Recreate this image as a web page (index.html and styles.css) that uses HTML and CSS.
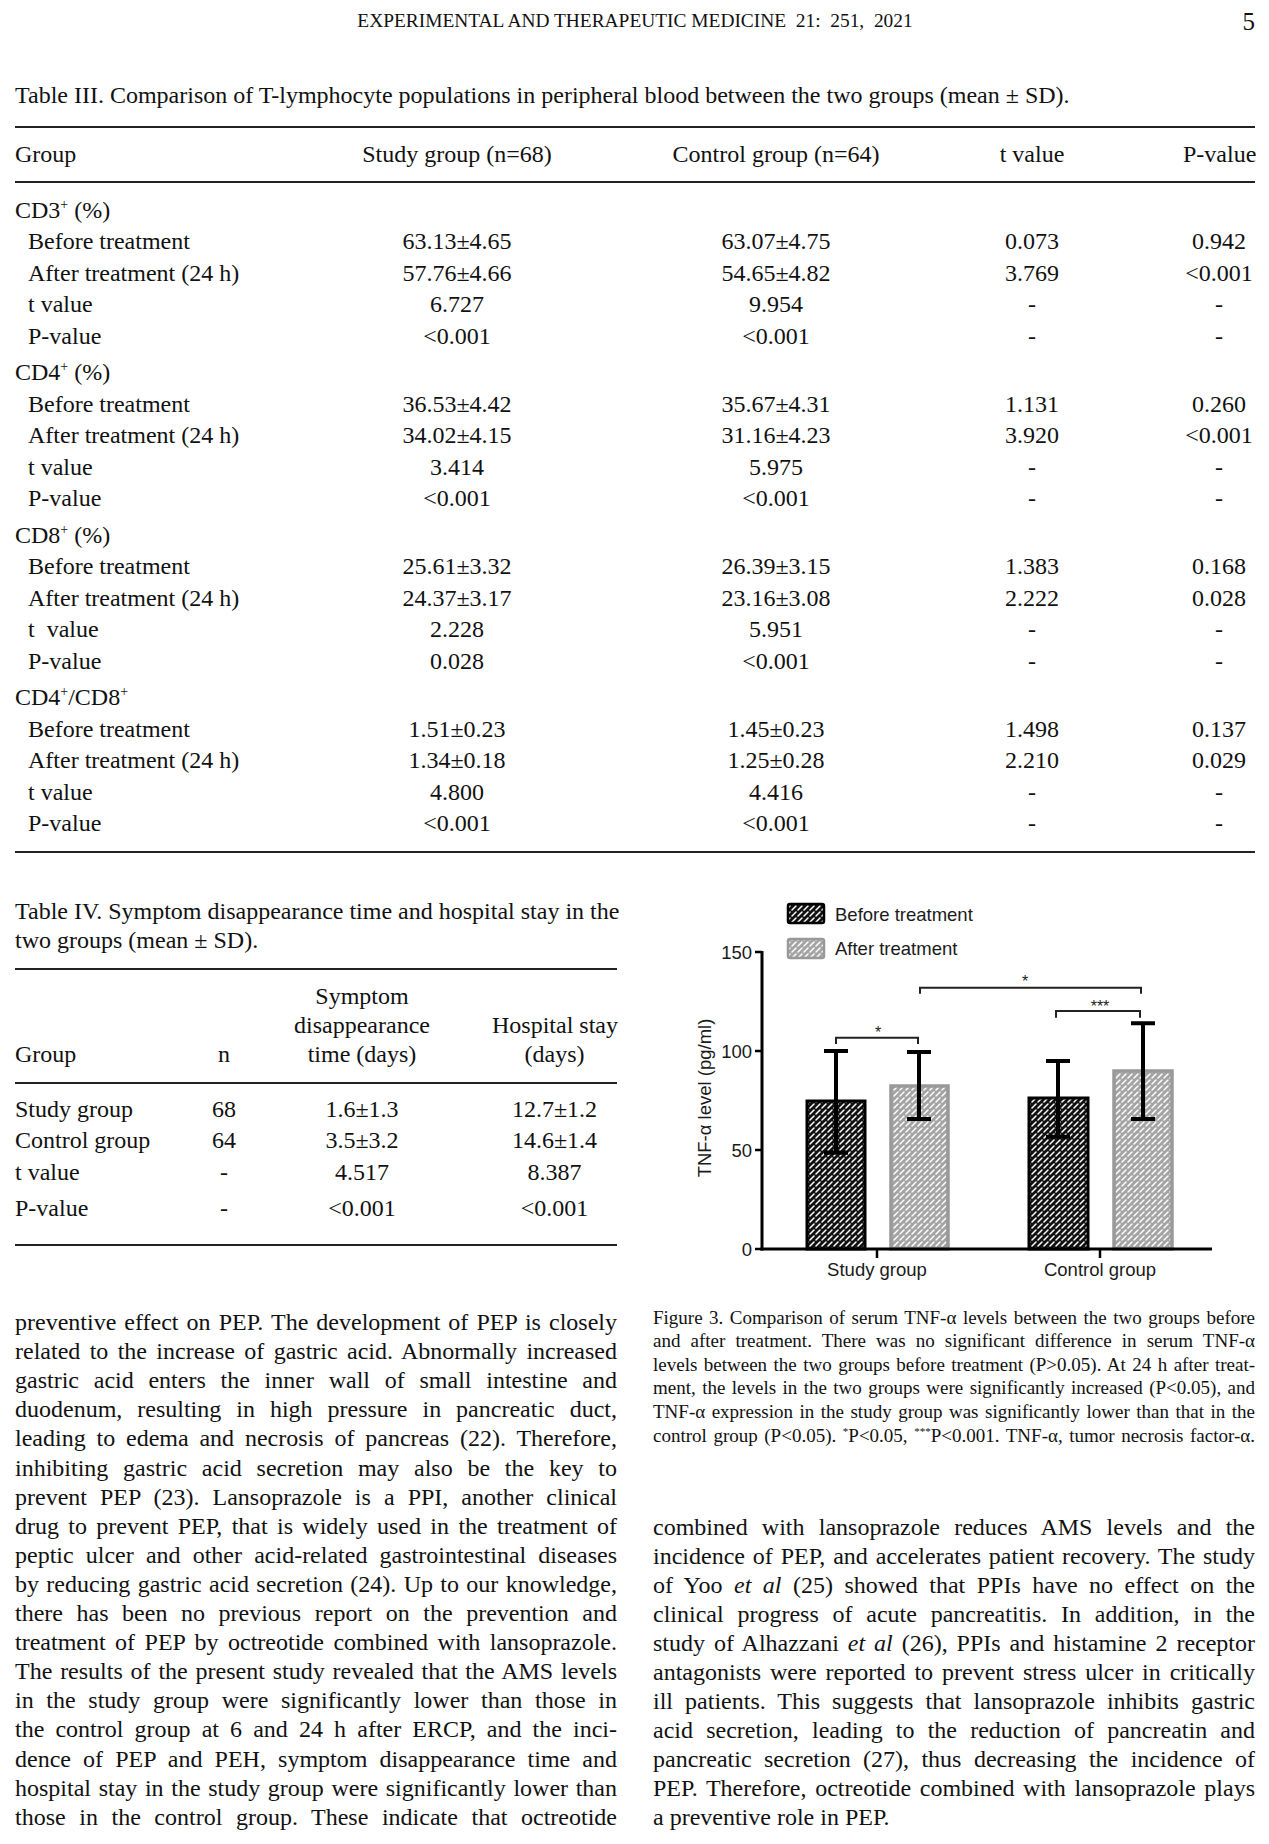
FILE: index.html
```html
<!DOCTYPE html>
<html lang="en">
<head>
<meta charset="utf-8">
<title>Experimental and Therapeutic Medicine 21: 251, 2021 - page 5</title>
<link rel="stylesheet" href="styles.css">
</head>
<body>
<div class="page">
  <header class="running">
    <div class="run-title">EXPERIMENTAL AND THERAPEUTIC MEDICINE&nbsp; 21:&nbsp; 251,&nbsp; 2021</div>
    <div class="folio">5</div>
  </header>

  <section class="t3-sec">
    <p class="tcap">Table III. Comparison of T-lymphocyte populations in peripheral blood between the two groups (mean ± SD).</p>
    <div class="t3">
      <div class="r5 t3-head">
        <span>Group</span><span>Study group (n=68)</span><span>Control group (n=64)</span><span>t value</span><span>P-value</span>
      </div>
      <div class="t3-body">
        <div class="grp first">CD3<sup>+</sup> (%)</div>
        <div class="r5"><span>Before treatment</span><span>63.13±4.65</span><span>63.07±4.75</span><span>0.073</span><span>0.942</span></div>
        <div class="r5"><span>After treatment (24 h)</span><span>57.76±4.66</span><span>54.65±4.82</span><span>3.769</span><span>&lt;0.001</span></div>
        <div class="r5"><span>t value</span><span>6.727</span><span>9.954</span><span>-</span><span>-</span></div>
        <div class="r5"><span>P-value</span><span>&lt;0.001</span><span>&lt;0.001</span><span>-</span><span>-</span></div>

        <div class="grp">CD4<sup>+</sup> (%)</div>
        <div class="r5"><span>Before treatment</span><span>36.53±4.42</span><span>35.67±4.31</span><span>1.131</span><span>0.260</span></div>
        <div class="r5"><span>After treatment (24 h)</span><span>34.02±4.15</span><span>31.16±4.23</span><span>3.920</span><span>&lt;0.001</span></div>
        <div class="r5"><span>t value</span><span>3.414</span><span>5.975</span><span>-</span><span>-</span></div>
        <div class="r5"><span>P-value</span><span>&lt;0.001</span><span>&lt;0.001</span><span>-</span><span>-</span></div>

        <div class="grp">CD8<sup>+</sup> (%)</div>
        <div class="r5"><span>Before treatment</span><span>25.61±3.32</span><span>26.39±3.15</span><span>1.383</span><span>0.168</span></div>
        <div class="r5"><span>After treatment (24 h)</span><span>24.37±3.17</span><span>23.16±3.08</span><span>2.222</span><span>0.028</span></div>
        <div class="r5"><span>t&nbsp; value</span><span>2.228</span><span>5.951</span><span>-</span><span>-</span></div>
        <div class="r5"><span>P-value</span><span>0.028</span><span>&lt;0.001</span><span>-</span><span>-</span></div>

        <div class="grp">CD4<sup>+</sup>/CD8<sup>+</sup></div>
        <div class="r5"><span>Before treatment</span><span>1.51±0.23</span><span>1.45±0.23</span><span>1.498</span><span>0.137</span></div>
        <div class="r5"><span>After treatment (24 h)</span><span>1.34±0.18</span><span>1.25±0.28</span><span>2.210</span><span>0.029</span></div>
        <div class="r5"><span>t value</span><span>4.800</span><span>4.416</span><span>-</span><span>-</span></div>
        <div class="r5"><span>P-value</span><span>&lt;0.001</span><span>&lt;0.001</span><span>-</span><span>-</span></div>
      </div>
    </div>
  </section>

  <div class="cols">
    <div class="col left">
      <p class="t4cap">Table IV. Symptom disappearance time and hospital stay in the<br>two groups (mean ± SD).</p>
      <div class="t4">
        <div class="r4 t4-head">
          <span>Group</span><span>n</span><span>Symptom<br>disappearance<br>time (days)</span><span>Hospital stay<br>(days)</span>
        </div>
        <div class="t4-body">
          <div class="r4"><span>Study group</span><span>68</span><span>1.6±1.3</span><span>12.7±1.2</span></div>
          <div class="r4"><span>Control group</span><span>64</span><span>3.5±3.2</span><span>14.6±1.4</span></div>
          <div class="r4"><span>t value</span><span>-</span><span>4.517</span><span>8.387</span></div>
          <div class="r4 pv"><span>P-value</span><span>-</span><span>&lt;0.001</span><span>&lt;0.001</span></div>
        </div>
      </div>

      <div class="prose">
        <span class="ln">preventive effect on PEP. The development of PEP is closely</span>
        <span class="ln">related to the increase of gastric acid. Abnormally increased</span>
        <span class="ln">gastric acid enters the inner wall of small intestine and</span>
        <span class="ln">duodenum, resulting in high pressure in pancreatic duct,</span>
        <span class="ln">leading to edema and necrosis of pancreas (22). Therefore,</span>
        <span class="ln">inhibiting gastric acid secretion may also be the key to</span>
        <span class="ln">prevent PEP (23). Lansoprazole is a PPI, another clinical</span>
        <span class="ln">drug to prevent PEP, that is widely used in the treatment of</span>
        <span class="ln">peptic ulcer and other acid-related gastrointestinal diseases</span>
        <span class="ln">by reducing gastric acid secretion (24). Up to our knowledge,</span>
        <span class="ln">there has been no previous report on the prevention and</span>
        <span class="ln">treatment of PEP by octreotide combined with lansoprazole.</span>
        <span class="ln">The results of the present study revealed that the AMS levels</span>
        <span class="ln">in the study group were significantly lower than those in</span>
        <span class="ln">the control group at 6 and 24 h after ERCP, and the inci-</span>
        <span class="ln">dence of PEP and PEH, symptom disappearance time and</span>
        <span class="ln">hospital stay in the study group were significantly lower than</span>
        <span class="ln">those in the control group. These indicate that octreotide</span>
      </div>
    </div>

    <div class="col right">
      <svg class="chart" width="602" height="425" viewBox="0 0 602 425" role="img" aria-label="Bar chart of TNF-alpha levels">
        <defs>
          <pattern id="hd" width="6" height="6" patternUnits="userSpaceOnUse">
            <rect width="6" height="6" fill="#111"/>
            <path d="M1 5 L5 1" stroke="#fff" stroke-width="1.5" stroke-linecap="round"/>
          </pattern>
          <pattern id="hl" width="6" height="6" patternUnits="userSpaceOnUse">
            <rect width="6" height="6" fill="#a4a4a4"/>
            <path d="M1 5 L5 1" stroke="#fff" stroke-width="1.5" stroke-linecap="round"/>
          </pattern>
        </defs>

        <!-- legend -->
        <rect x="135" y="23" width="36" height="19" rx="2" fill="url(#hd)" stroke="#000" stroke-width="2.5"/>
        <rect x="135" y="58" width="36" height="19" rx="2" fill="url(#hl)" stroke="#999" stroke-width="2.5"/>
        <text class="ct" x="182" y="39.5">Before treatment</text>
        <text class="ct" x="182" y="73.5">After treatment</text>

        <!-- bars -->
        <rect x="154" y="220" width="58" height="148" fill="url(#hd)" stroke="#000" stroke-width="3"/>
        <rect x="238" y="205" width="57" height="163" fill="url(#hl)" stroke="#999" stroke-width="3.5"/>
        <rect x="376" y="217" width="59" height="151" fill="url(#hd)" stroke="#000" stroke-width="3"/>
        <rect x="461" y="190" width="58" height="178" fill="url(#hl)" stroke="#999" stroke-width="3.5"/>

        <!-- error bars -->
        <g stroke="#000" stroke-width="4" fill="none">
          <path d="M183 170 V271.7 M171 170 H195 M171 271.7 H195"/>
          <path d="M266 171 V238 M254 171 H278 M254 238 H278"/>
          <path d="M405 180 V255.7 M393 180 H417 M393 255.7 H417"/>
          <path d="M490 142.3 V238 M478 142.3 H502 M478 238 H502"/>
        </g>

        <!-- significance brackets -->
        <g stroke="#222" stroke-width="2" fill="none">
          <path d="M183 163 V156.7 H265 V163"/>
          <path d="M403 136.7 V130 H487 V136.7"/>
          <path d="M267 112.7 V106.7 H488 V112.7"/>
        </g>
        <text class="star" x="225" y="157">*</text>
        <text class="star" x="447" y="131">***</text>
        <text class="star" x="372" y="106">*</text>

        <!-- axes -->
        <g stroke="#000" fill="none">
          <path d="M109 70 V369.5" stroke-width="3"/>
          <path d="M107.5 368 H559" stroke-width="3"/>
          <path d="M102 71 H109 M102 170 H109 M102 269 H109 M102 368 H109" stroke-width="2.5"/>
          <path d="M224 368 V377 M447 368 V377" stroke-width="2.5"/>
        </g>
        <text class="ct tick" x="99" y="77.5">150</text>
        <text class="ct tick" x="99" y="176.5">100</text>
        <text class="ct tick" x="99" y="275.5">50</text>
        <text class="ct tick" x="99" y="374.5">0</text>

        <text class="ct mid" transform="translate(57.5,217) rotate(-90)">TNF-α level (pg/ml)</text>
        <text class="ct mid" x="224" y="394.5">Study group</text>
        <text class="ct mid" x="447" y="394.5">Control group</text>
      </svg>

      <div class="cap">
        <span class="ln">Figure 3. Comparison of serum TNF-α levels between the two groups before</span>
        <span class="ln">and after treatment. There was no significant difference in serum TNF-α</span>
        <span class="ln">levels between the two groups before treatment (P&gt;0.05). At 24 h after treat-</span>
        <span class="ln">ment, the levels in the two groups were significantly increased (P&lt;0.05), and</span>
        <span class="ln">TNF-α expression in the study group was significantly lower than that in the</span>
        <span class="ln">control group (P&lt;0.05). <sup>*</sup>P&lt;0.05, <sup>***</sup>P&lt;0.001. TNF-α, tumor necrosis factor-α.</span>
      </div>

      <div class="prose">
        <span class="ln">combined with lansoprazole reduces AMS levels and the</span>
        <span class="ln">incidence of PEP, and accelerates patient recovery. The study</span>
        <span class="ln">of Yoo <i>et al</i> (25) showed that PPIs have no effect on the</span>
        <span class="ln">clinical progress of acute pancreatitis. In addition, in the</span>
        <span class="ln">study of Alhazzani <i>et al</i> (26), PPIs and histamine 2 receptor</span>
        <span class="ln">antagonists were reported to prevent stress ulcer in critically</span>
        <span class="ln">ill patients. This suggests that lansoprazole inhibits gastric</span>
        <span class="ln">acid secretion, leading to the reduction of pancreatin and</span>
        <span class="ln">pancreatic secretion (27), thus decreasing the incidence of</span>
        <span class="ln">PEP. Therefore, octreotide combined with lansoprazole plays</span>
        <span class="ln end">a preventive role in PEP.</span>
      </div>
    </div>
  </div>
</div>
</body>
</html>
```

FILE: styles.css
```css
* { box-sizing: border-box; }

html, body {
  margin: 0;
  padding: 0;
  background: #fff;
}

body {
  font-family: "Liberation Serif", "Times New Roman", serif;
  color: #111;
}

.page {
  width: 1269px;
  padding: 9px 14px 0 15px;
}

/* running head */
.running {
  display: grid;
  grid-template-columns: 1fr auto 1fr;
  align-items: end;
  height: 26px;
}
.run-title {
  grid-column: 2;
  font-size: 19.4px;
  line-height: 24px;
  white-space: nowrap;
  align-self: start;
}
.folio {
  grid-column: 3;
  justify-self: end;
  font-size: 25px;
  line-height: 26px;
}

/* table III */
.tcap {
  margin: 45.5px 0 0;
  font-size: 24px;
  line-height: 29px;
  white-space: nowrap;
}
.t3 {
  margin-top: 16.5px;
  border-top: 2px solid #222;
  border-bottom: 2px solid #222;
}
.r5 {
  display: grid;
  grid-template-columns: 300px 284px 354px 158px 144px;
  font-size: 24px;
  line-height: 31.5px;
  text-align: center;
  white-space: nowrap;
}
.r5 > :first-child {
  text-align: left;
  padding-left: 13px;
}
.r5 > :last-child {
  padding-left: 72px;
}
.t3-head {
  height: 55px;
  align-items: center;
  border-bottom: 2px solid #222;
}
.t3-head > :first-child {
  padding-left: 0;
}
.t3-body {
  padding: 11.8px 0 11.5px;
}
.grp {
  font-size: 24px;
  line-height: 31.5px;
  margin-top: 5px;
}
.grp.first {
  margin-top: 0;
}

sup {
  font-size: 58%;
  line-height: 0;
  vertical-align: 0.62em;
}

/* two columns */
.cols {
  display: grid;
  grid-template-columns: 602px 602px;
  column-gap: 36px;
  margin-top: 27.3px;
  align-items: start;
}

/* table IV */
.t4cap {
  margin: 16.5px 0 0;
  font-size: 24px;
  line-height: 29px;
  white-space: nowrap;
}
.t4 {
  margin-top: 12.5px;
  border-top: 2px solid #222;
  border-bottom: 2px solid #222;
}
.r4 {
  display: grid;
  grid-template-columns: 165px 88px 188px 161px;
  font-size: 24px;
  text-align: center;
  white-space: nowrap;
}
.r4 > :first-child {
  text-align: left;
}
.r4 > :last-child {
  padding-left: 36px;
}
.t4-head {
  padding: 12.5px 0;
  line-height: 29px;
  align-items: end;
  border-bottom: 2px solid #222;
}
.t4-body {
  padding: 10.25px 0 19.25px;
}
.t4-body .r4 {
  line-height: 31.5px;
}
.t4-body .r4.pv {
  margin-top: 4.5px;
}

/* running text */
.prose {
  font-size: 24px;
  line-height: 29.1px;
}
.left .prose {
  margin-top: 62.5px;
}
.right .prose {
  margin-top: 65.4px;
}
.ln {
  display: block;
  text-align: justify;
  text-align-last: justify;
}
.ln.end {
  text-align-last: left;
}

/* figure */
.chart {
  display: block;
}
.chart .ct {
  font-family: "Liberation Sans", Arial, sans-serif;
  font-size: 18.5px;
  fill: #1a1a1a;
}
.chart .tick {
  text-anchor: end;
}
.chart .mid {
  text-anchor: middle;
}
.chart .star {
  font-family: "Liberation Sans", Arial, sans-serif;
  font-size: 16px;
  fill: #222;
  text-anchor: middle;
}

.cap {
  font-size: 19px;
  line-height: 23.6px;
}
```
